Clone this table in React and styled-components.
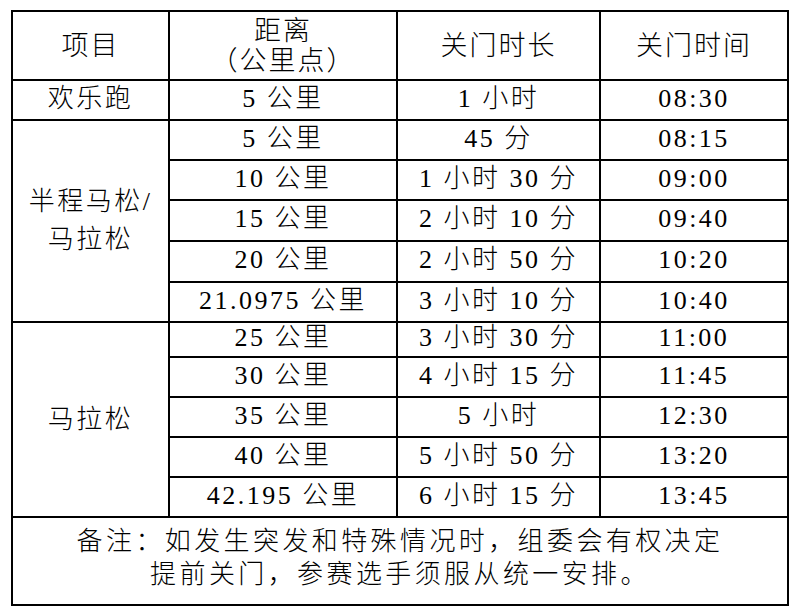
import React from "react"
import styled, { createGlobalStyle } from "styled-components"

const GlobalStyle = createGlobalStyle`
    body {
        margin: 0;
        background: #ffffff;
    }
`

const Page = styled.div`
    padding: 10px 0 0 11px;
    width: 797px;
    height: 615px;
    box-sizing: border-box;
    background: #ffffff;
`

const Table = styled.table`
    width: 776px;
    border-collapse: collapse;
    table-layout: fixed;
    font-family: "Liberation Serif", "Noto Sans CJK SC", serif;
    font-weight: 300;
    font-size: 26px;
    color: #000000;
    border: 2px solid #000000;
`

const Row = styled.tr`
    height: ${p => p.$h}px;
`

const Head = styled.th`
    border: 2px solid #000000;
    font-weight: 300;
    font-size: 27px;
    letter-spacing: 2px;
    line-height: 30px;
    text-align: center;
    vertical-align: middle;
    padding: 0;
`

const Cell = styled.td`
    border: 2px solid #000000;
    text-align: center;
    vertical-align: middle;
    padding: 0 0 ${p => (p.$lift ? 3 : 0)}px;
    line-height: ${p => (p.$tall ? 38 : 30)}px;
    letter-spacing: 2.5px;
    white-space: nowrap;
`

const Note = styled.td`
    border: 2px solid #000000;
    text-align: center;
    vertical-align: middle;
    padding: 0 0 6px;
    font-size: 26px;
    letter-spacing: 3.4px;
    line-height: 33px;
`

const fun = ["5 公里", "1 小时", "08:30"]

const half = [
    { h: 40, d: ["5 公里", "45 分", "08:15"] },
    { h: 40, d: ["10 公里", "1 小时 30 分", "09:00"] },
    { h: 41, d: ["15 公里", "2 小时 10 分", "09:40"] },
    { h: 41, d: ["20 公里", "2 小时 50 分", "10:20"] },
    { h: 40, d: ["21.0975 公里", "3 小时 10 分", "10:40"] },
]

const full = [
    { h: 35, d: ["25 公里", "3 小时 30 分", "11:00"] },
    { h: 40, d: ["30 公里", "4 小时 15 分", "11:45"] },
    { h: 40, d: ["35 公里", "5 小时", "12:30"] },
    { h: 40, d: ["40 公里", "5 小时 50 分", "13:20"] },
    { h: 40, d: ["42.195 公里", "6 小时 15 分", "13:45"] },
]

const Group = ({ label, rows }) =>
    rows.map((r, i) => (
        <Row $h={r.h} key={i}>
            {i === 0 && (
                <Cell rowSpan={rows.length} $tall>
                    {label}
                </Cell>
            )}
            {r.d.map((v, j) => (
                <Cell key={j} $lift>{v}</Cell>
            ))}
        </Row>
    ))

const App = () => {
    return (
        <Page>
            <GlobalStyle />
            <Table>
                <colgroup>
                    <col style={{ width: 157 }} />
                    <col style={{ width: 228 }} />
                    <col style={{ width: 203 }} />
                    <col style={{ width: 188 }} />
                </colgroup>
                <tbody>
                    <Row $h={69}>
                        <Head>项目</Head>
                        <Head>
                            距离
                            <br />
                            （公里点）
                        </Head>
                        <Head>关门时长</Head>
                        <Head>关门时间</Head>
                    </Row>
                    <Row $h={40}>
                        <Cell $lift>欢乐跑</Cell>
                        {fun.map((v, j) => (
                            <Cell key={j} $lift>{v}</Cell>
                        ))}
                    </Row>
                    <Group
                        label={<>半程马松/<br />马拉松</>}
                        rows={half}
                    />
                    <Group label="马拉松" rows={full} />
                    <Row $h={88}>
                        <Note colSpan={4}>
                            备注：如发生突发和特殊情况时，组委会有权决定
                            <br />
                            提前关门，参赛选手须服从统一安排。
                        </Note>
                    </Row>
                </tbody>
            </Table>
        </Page>
    )
}

export default App
